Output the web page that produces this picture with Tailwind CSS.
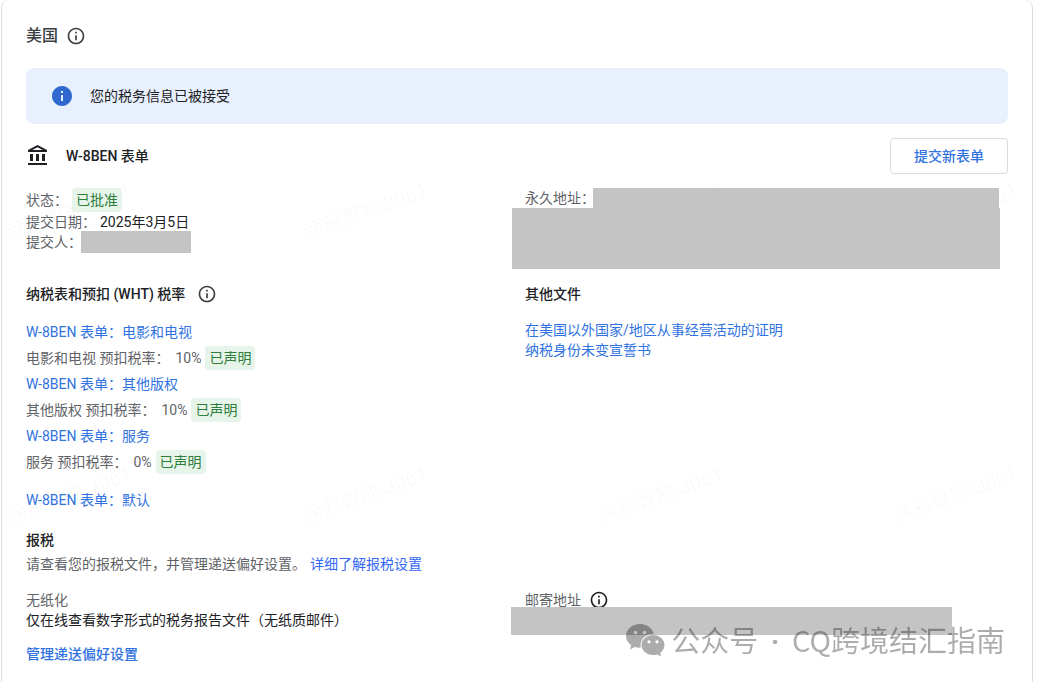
<!DOCTYPE html>
<html lang="zh-CN">
<head>
<meta charset="UTF-8">
<meta name="viewport" content="width=device-width, initial-scale=1.0">
<title>美国税务信息</title>
<script src="https://cdn.jsdelivr.net/npm/@tailwindcss/browser@4"></script>
</head>
<body class="bg-white min-h-screen overflow-hidden font-['Roboto','Noto_Sans_CJK_SC',sans-serif] text-sm leading-5 text-[#202124]">

<!-- shared icons -->
<svg class="hidden">
  <symbol id="info" viewBox="0 0 24 24">
    <path d="M11 7h2v2h-2zm0 4h2v6h-2zm1-9C6.48 2 2 6.48 2 12s4.48 10 10 10 10-4.48 10-10S17.52 2 12 2zm0 18c-4.41 0-8-3.59-8-8s3.59-8 8-8 8 3.59 8 8-3.59 8-8 8z"/>
  </symbol>
</svg>

<main class="relative ml-px mr-1 min-h-screen rounded-t-lg border-x border-[#dadce0] px-6 pt-6 pb-4">

  <!-- faint user watermark -->
  <div class="absolute inset-0 overflow-hidden pointer-events-none select-none text-xl text-black/3" aria-hidden="true">
    <span class="absolute left-[2px] top-[197px] -rotate-20 whitespace-nowrap">涂鸦智能-3061</span>
    <span class="absolute left-[298px] top-[197px] -rotate-20 whitespace-nowrap">涂鸦智能-3061</span>
    <span class="absolute left-[593px] top-[197px] -rotate-20 whitespace-nowrap">涂鸦智能-3061</span>
    <span class="absolute left-[888px] top-[197px] -rotate-20 whitespace-nowrap">涂鸦智能-3061</span>
    <span class="absolute left-[2px] top-[481px] -rotate-20 whitespace-nowrap">涂鸦智能-3061</span>
    <span class="absolute left-[298px] top-[481px] -rotate-20 whitespace-nowrap">涂鸦智能-3061</span>
    <span class="absolute left-[593px] top-[481px] -rotate-20 whitespace-nowrap">涂鸦智能-3061</span>
    <span class="absolute left-[888px] top-[481px] -rotate-20 whitespace-nowrap">涂鸦智能-3061</span>
  </div>

  <div class="relative">
    <div class="flex items-center gap-2 h-6 text-[#3c4043]">
      <h1 class="text-base font-medium">美国</h1>
      <svg class="size-5" fill="currentColor"><use href="#info"/></svg>
    </div>

    <div class="mt-5 flex items-center gap-[18px] h-14 px-[26px] rounded-lg bg-[#e8f0fe]">
      <svg class="size-5 fill-[#2f69cf]" viewBox="2 2 20 20"><path d="M12 2C6.48 2 2 6.48 2 12s4.48 10 10 10 10-4.48 10-10S17.52 2 12 2zm1 15h-2v-6h2v6zm0-8h-2V7h2v2z"/></svg>
      <p>您的税务信息已被接受</p>
    </div>

    <div class="mt-3.5 flex items-center">
      <svg class="size-6 fill-[#202124]" viewBox="0 0 24 24"><path d="M4 10h3v7H4zm6 0h3v7h-3zm6 0h3v7h-3zM2 19h19v2H2zM11.500 3.260L16.710 6H6.290zm0-2.260L2 6v2h19V6z"/></svg>
      <h2 class="ml-4 font-medium">W-8BEN 表单</h2>
      <button type="button" class="ml-auto h-9 px-[23px] rounded border border-[#dadce0] font-medium text-[#2f72e0]">提交新表单</button>
    </div>

    <section class="mt-3.5 grid grid-cols-2 gap-x-4">
      <div class="text-[#5f6368]">
        <div class="flex items-center gap-1"><span>状态：</span><span class="px-1 rounded bg-[#e6f4ea] leading-6 text-[#2e7d3a]">已批准</span></div>
        <div class="flex gap-1"><span>提交日期：</span><span class="text-[#202124]">2025年3月5日</span></div>
        <div class="flex h-5"><span>提交人：</span><span class="-ml-px -mt-px h-[22px] w-[110px] bg-[#c4c4c4]"></span></div>
      </div>
      <div class="text-[#5f6368]">
        <div class="flex"><span class="w-[68px] whitespace-nowrap">永久地址：</span><span class="relative flex-1 mr-[9px] bg-[#c4c4c4]"></span></div>
        <div class="-ml-[13px] mr-2 h-[61px] bg-[#c4c4c4]"></div>
      </div>
    </section>

    <section class="mt-[15px] grid grid-cols-2 gap-x-4">
      <div>
        <div class="flex items-center gap-3">
          <h3 class="font-medium">纳税表和预扣 (WHT) 税率</h3>
          <svg class="size-5 fill-[#3c4043]"><use href="#info"/></svg>
        </div>
        <div class="mt-3.5 text-[#5f6368]">
          <a href="#" class="block leading-7 text-[#2f72e0]">W-8BEN 表单：电影和电视</a>
          <div class="flex items-center"><span>电影和电视 预扣税率：</span><span class="ml-1.5 mr-1">10%</span><span class="px-1 rounded bg-[#e6f4ea] leading-6 text-[#2e7d3a]">已声明</span></div>
          <a href="#" class="block leading-7 text-[#2f72e0]">W-8BEN 表单：其他版权</a>
          <div class="flex items-center"><span>其他版权 预扣税率：</span><span class="ml-1.5 mr-1">10%</span><span class="px-1 rounded bg-[#e6f4ea] leading-6 text-[#2e7d3a]">已声明</span></div>
          <a href="#" class="block leading-7 text-[#2f72e0]">W-8BEN 表单：服务</a>
          <div class="flex items-center"><span>服务 预扣税率：</span><span class="ml-1.5 mr-1">0%</span><span class="px-1 rounded bg-[#e6f4ea] leading-6 text-[#2e7d3a]">已声明</span></div>
          <a href="#" class="mt-3 block leading-7 text-[#2f72e0]">W-8BEN 表单：默认</a>
        </div>
      </div>
      <div>
        <h3 class="font-medium">其他文件</h3>
        <div class="mt-4 text-[#2f72e0]">
          <a href="#" class="block">在美国以外国家/地区从事经营活动的证明</a>
          <a href="#" class="block">纳税身份未变宣誓书</a>
        </div>
      </div>
    </section>

    <section class="mt-4">
      <h3 class="font-medium">报税</h3>
      <p class="mt-1 text-[#5f6368]">请查看您的报税文件，并管理递送偏好设置。<a href="#" class="ml-1 text-[#3367f6]">详细了解报税设置</a></p>
    </section>

    <section class="mt-4 grid grid-cols-2 gap-x-4">
      <div>
        <p class="text-[#5f6368]">无纸化</p>
        <p>仅在线查看数字形式的税务报告文件（无纸质邮件）</p>
        <a href="#" class="mt-3.5 block font-medium text-[#2f72e0]">管理递送偏好设置</a>
      </div>
      <div>
        <div class="flex items-center gap-2 text-[#5f6368]">
          <span>邮寄地址</span>
          <svg class="size-5 fill-[#202124]"><use href="#info"/></svg>
        </div>
        <div class="relative -mt-[3px] -ml-3.5 mr-14 h-7 bg-[#c4c4c4]"></div>
      </div>
    </section>
  </div>

  <!-- account watermark over the corner of the card -->
  <div class="absolute right-[27px] top-[619px] flex items-center gap-1.5 opacity-32 text-[29px] leading-10 whitespace-nowrap text-black font-['Noto_Sans_CJK_SC',sans-serif] pointer-events-none">
    <svg class="w-[39px] h-[34px]" viewBox="0 0 39 34">
      <mask id="gap">
        <rect width="39" height="34" fill="white"/>
        <ellipse cx="27" cy="21.500" rx="12.500" ry="11.500" fill="black"/>
        <circle cx="9.500" cy="8.500" r="1.800" fill="black"/>
        <circle cx="18.500" cy="8.500" r="1.800" fill="black"/>
      </mask>
      <path mask="url(#gap)" d="M14 0C6.300 0 0 5.200 0 12c0 3.800 2 7 5.200 9.200L4 25.500l5-2.500c1.600.5 3.300.8 5 .8 7.700 0 14-5.200 14-11.900S21.700 0 14 0z"/>
      <path fill-rule="evenodd" d="M27 11c-6.400 0-11.500 4.500-11.500 10S20.600 31 27 31c1.500 0 2.900-.2 4.200-.6l4 2.100-1-3.600c2.600-1.900 4.300-4.700 4.300-7.900 0-5.500-5.100-10-11.500-10zM23 16.200a1.600 1.600 0 1 1 0 3.200 1.600 1.600 0 0 1 0-3.200zm8 0a1.600 1.600 0 1 1 0 3.200 1.600 1.600 0 0 1 0-3.200z"/>
    </svg>
    <span>公众号 <span class="mx-1.5 font-['Roboto',sans-serif] font-bold">·</span> CQ跨境结汇指南</span>
  </div>
</main>

</body>
</html>
